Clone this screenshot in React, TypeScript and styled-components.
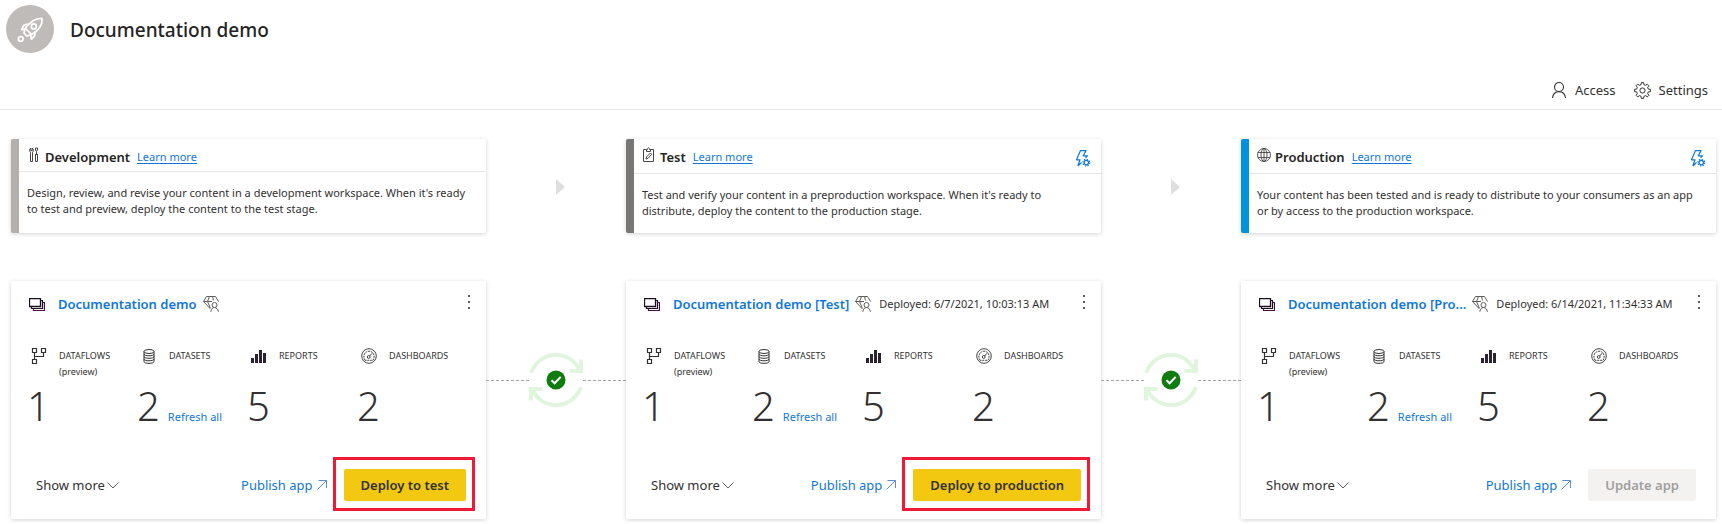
import React from 'react';
import styled, { createGlobalStyle } from 'styled-components';

const GlobalStyle = createGlobalStyle`
  *, *::before, *::after { box-sizing: border-box; }
  body {
    margin: 0;
    background: #fff;
    color: #323130;
    font-family: "Noto Sans", "Open Sans", sans-serif;
    font-size: 13px;
    line-height: 20px;
  }
  h1, h2, h3, p, dl, dd, dt { margin: 0; }
  button { font-family: inherit; cursor: pointer; }
  svg { display: block; flex: none; }
`;

/* ---------- icons ---------- */

const RocketIcon = () => (
  <svg width="48" height="48" viewBox="0 0 48 48" fill="none" stroke="#fff" strokeWidth="1.8" strokeLinejoin="round" aria-hidden="true">
    <path d="M36 13.4C29.500 13 24.500 16.500 19.200 23.200L25.700 29.600C32.500 25.500 36.800 20.500 36 13.400Z" />
    <circle cx="27.800" cy="21.400" r="2.500" />
    <path d="M23 19L18 20.200L15.600 24.700L18.700 24.300M29 27.300L28.600 30.800L25.600 34.200L24.600 30.800" />
    <path d="M19.200 23.200L18 28L20.700 31L25.700 29.600" />
    <circle cx="14.700" cy="34" r="2.300" />
  </svg>
);

const PersonIcon = () => (
  <svg width="16" height="18" viewBox="0 0 16 18" fill="none" stroke="#323130" strokeWidth="1.100" aria-hidden="true">
    <circle cx="8" cy="6" r="4.500" />
    <path d="M1.500 17C2 13 4.500 10.600 8 10.600S14 13 14.500 17" />
  </svg>
);

const gearPath = (cx: number, cy: number, outer: number, inner: number) => {
  const pts: string[] = [];
  for (let i = 0; i < 8; i += 1) {
    [[-14, inner], [-8, outer], [8, outer], [14, inner]].forEach(([off, r]) => {
      const a = ((i * 45 + off) * Math.PI) / 180;
      pts.push(`${(cx + r * Math.cos(a)).toFixed(2)} ${(cy + r * Math.sin(a)).toFixed(2)}`);
    });
  }
  return `M${pts.join('L')}Z`;
};

const GearIcon = () => (
  <svg width="17" height="17" viewBox="0 0 17 17" fill="none" stroke="#323130" strokeLinejoin="round" aria-hidden="true">
    <path d={gearPath(8.5, 8.5, 8, 6)} />
    <circle cx="8.500" cy="8.500" r="2.600" />
  </svg>
);

const ToolsIcon = () => (
  <svg width="14" height="16" viewBox="0 0 14 16" fill="none" stroke="#484644" strokeWidth="1" aria-hidden="true">
    <path d="M3.800 1V3.700H5.200V1C6.800 2 6.700 4.400 5.500 5.300V14.500H3.500V5.300C2.300 4.400 2.200 2 3.800 1Z" />
    <path d="M8.500 1H10.500V3L9.500 4.500L8.500 3ZM9.500 4.500V7.500M8 7.500H11M8.500 7.500V14.500H10.500V7.500" />
  </svg>
);

const ClipboardIcon = () => (
  <svg width="14" height="16" viewBox="0 0 14 16" fill="none" stroke="#484644" strokeWidth="1" aria-hidden="true">
    <path d="M4.500 2.500H1.500V14.500H11.500V2.500H8.500" />
    <path d="M4.500 4.500V2.500H5.500C5.500 0.200 7.500 0.200 7.500 2.500H8.500V4.500Z" />
    <path d="M4 12L4.600 9.800L8.400 6L9.700 7.300L6 11.300Z" />
  </svg>
);

const GlobeIcon = () => (
  <svg width="14" height="16" viewBox="0 0 14 16" fill="none" stroke="#484644" strokeWidth="0.900" aria-hidden="true">
    <circle cx="7" cy="8" r="6.500" />
    <ellipse cx="7" cy="8" rx="3" ry="6.500" />
    <path d="M7 1.500V14.500M1 5.500H13M1 10.500H13" />
  </svg>
);

const RuleIcon = () => (
  <svg width="16" height="17" viewBox="0 0 16 17" fill="none" stroke="#1177d7" strokeWidth="1.200" strokeLinejoin="round" aria-hidden="true">
    <path d="M2.800 16L5 9.800H1.500L5.500 0.600H11L8.300 5.800H12.500L10.500 7.800M2.800 16L6.500 12.500" />
    <circle cx="11.300" cy="12.600" r="2.200" />
    <circle cx="11.300" cy="12.600" r="3.400" strokeDasharray="1.300 1.370" />
  </svg>
);

const StackIcon = () => (
  <svg width="16" height="13" viewBox="0 0 16 13" fill="none" stroke="#1b1020" strokeWidth="1" aria-hidden="true">
    <path d="M0.500 0.500H11.500V8.500H0.500Z" strokeWidth="1.300" />
    <path d="M11.500 2.500H13.500V10.500H2.500V8.500" strokeWidth="1.200" />
    <path d="M13.500 4.500H15.500V12.500H4.500V10.500" stroke="#4a0d4a" strokeWidth="1.200" />
  </svg>
);

const DiamondIcon = () => (
  <svg width="16" height="16" viewBox="0 0 16 16" fill="none" stroke="#605e5c" strokeWidth="1" strokeLinejoin="round" aria-hidden="true">
    <path d="M7.500 13L0.500 5.500L3.500 0.500H12.500L15.500 5.500M0.500 5.500H9M4.500 5.500L7.300 12M4.500 5.500L6.500 0.500M10.500 4.500L9.500 0.500" />
    <circle cx="11.500" cy="9" r="2.500" />
    <path d="M7.800 15.800C8.200 13 9.600 11.500 11.500 11.500S15 13 15.400 15.800" />
  </svg>
);

const DataflowIcon = () => (
  <svg width="16" height="16" viewBox="0 0 16 16" fill="none" stroke="#323130" strokeWidth="1.200" aria-hidden="true">
    <path d="M1.500 0.500H5.500V4.500H1.500ZM10.500 0.500H14.500V4.500H10.500ZM1.500 11.500H5.500V15.500H1.500Z" />
    <path d="M3.500 4.500V11.500M3.500 8.500H12.500V4.500" />
  </svg>
);

const DatasetIcon = () => (
  <svg width="12" height="15" viewBox="0 0 12 15" fill="none" stroke="#323130" strokeWidth="1" aria-hidden="true">
    <ellipse cx="6" cy="2.500" rx="5" ry="2" />
    <path d="M1 2.500V12.500C1 15 11 15 11 12.500V2.500M1 5C1 7.400 11 7.400 11 5M1 7.500C1 9.900 11 9.900 11 7.500M1 10C1 12.400 11 12.400 11 10" />
  </svg>
);

const ReportIcon = () => (
  <svg width="16" height="14" viewBox="0 0 16 14" fill="#2b2430" aria-hidden="true">
    <path d="M0 9H3V14H0ZM4 5H7V14H4ZM8 1H11V14H8ZM12 4H15V14H12Z" />
  </svg>
);

const DashboardIcon = () => (
  <svg width="16" height="16" viewBox="0 0 16 16" fill="none" stroke="#323130" strokeWidth="0.900" aria-hidden="true">
    <circle cx="8" cy="8" r="7.300" />
    <path d="M4 12.300C1.500 8.500 3.300 3.300 8 3.200S14.500 8.500 12 12.300Z" strokeDasharray="2 0.800" />
    <circle cx="7.700" cy="9" r="1.400" />
    <path d="M8.700 8L11 5.300" />
  </svg>
);

const ChevronIcon = () => (
  <svg width="12" height="7" viewBox="0 0 12 7" fill="none" stroke="#605e5c" aria-hidden="true">
    <path d="M0.500 0.500L6 6L11.500 0.500" />
  </svg>
);

const OpenIcon = () => (
  <svg width="10" height="10" viewBox="0 0 10 10" fill="none" stroke="#5a8fd8" aria-hidden="true">
    <path d="M1.500 0.500H9.500V8M9.500 0.500L0.500 9.500" />
  </svg>
);

const MoreIcon = () => (
  <svg width="2" height="14" viewBox="0 0 2 14" fill="#605e5c" aria-hidden="true">
    <path d="M0 0H2V2H0ZM0 6H2V8H0ZM0 12H2V14H0Z" />
  </svg>
);

const ArrowIcon = () => (
  <svg width="18" height="16" viewBox="0 0 18 16" fill="#dfdfdf" aria-hidden="true">
    <path d="M9 0L18 8L9 16Z" />
  </svg>
);

const SyncIcon = () => (
  <svg width="54" height="54" viewBox="0 0 54 54" fill="none" aria-label="Stages are in sync" role="img">
    <g stroke="#dff6dd" strokeWidth="4">
      <path d="M2 20C6 9 15.500 2 27 2C37.500 2 46 8 50.500 17" />
      <path d="M52 6.500V18H40.500" />
      <path d="M52 34C48 45 38.500 52 27 52C16.500 52 8 46 3.500 37" />
      <path d="M2 47.500V36H13.500" />
    </g>
    <circle cx="27" cy="27" r="9.500" fill="#107c10" />
    <path d="M22.500 27.300L25.600 30.300L31.700 23.900" stroke="#fff" strokeWidth="2" />
  </svg>
);

/* ---------- page chrome ---------- */

const Header = styled.header`
  display: flex;
  align-items: center;
  gap: 16px;
  padding: 5px 6px 0;
`;

const Avatar = styled.span`
  width: 48px;
  height: 48px;
  border-radius: 50%;
  background: #bfbbb8;
`;

const PageTitle = styled.h1`
  padding-top: 2px;
  font-size: 19px;
  font-weight: 500;
  line-height: 28px;
  color: #252423;
`;

const Toolbar = styled.div`
  display: flex;
  justify-content: flex-end;
  gap: 18px;
  padding: 27px 14px 9px;
  border-bottom: 1px solid #e6e6e6;
`;

const ToolButton = styled.button`
  display: flex;
  align-items: center;
  gap: 8px;
  padding: 0;
  border: 0;
  background: none;
  color: #323130;
  font-size: 13px;
  line-height: 20px;
`;

const Pipeline = styled.main`
  display: grid;
  grid-template-columns: minmax(0, 1fr) 140px minmax(0, 1fr) 140px minmax(0, 1fr);
  row-gap: 48px;
  padding: 29px 6px 5px 11px;
`;

const Card = styled.section`
  border-radius: 2px;
  background: #fff;
  box-shadow: 0 1px 4px rgba(0, 0, 0, 0.18);
`;

/* ---------- stage cards ---------- */

const StageCard = styled(Card)<{ $accent: string }>`
  border-left: 8px solid ${(p) => p.$accent};
`;

const StageHeader = styled.div`
  display: flex;
  align-items: flex-start;
  padding: 8px 10px 4px 8px;
  border-bottom: 1px solid #e6e6e6;
`;

const StageTitle = styled.h2`
  display: flex;
  gap: 4px;
  margin-right: 7px;
  font-size: 13px;
  font-weight: 600;
  line-height: 20px;
  color: #252423;
`;

const LearnMore = styled.a`
  font-size: 11px;
  line-height: 20px;
  color: #1177d7;
  text-underline-offset: 2px;
`;

const RuleButton = styled.button`
  margin-left: auto;
  padding: 3px 0 2px;
  border: 0;
  background: none;
`;

const StageText = styled.p`
  padding: 13px 12px 14px 8px;
  font-size: 11px;
  line-height: 16px;
`;

const StageArrow = styled.div`
  display: flex;
  align-items: center;
  justify-content: center;
  padding-top: 2px;
`;

/* ---------- workspace cards ---------- */

const WorkspaceCard = styled(Card)`
  display: flex;
  flex-direction: column;
  padding: 13px 0 18px;
`;

const WorkspaceHeader = styled.div`
  display: flex;
  align-items: center;
  padding: 0 16px 0 18px;
`;

const WorkspaceName = styled.a`
  min-width: 0;
  max-width: 182px;
  margin: 0 6px 0 13px;
  overflow: hidden;
  text-overflow: ellipsis;
  white-space: nowrap;
  font-size: 13px;
  font-weight: 600;
  line-height: 20px;
  color: #1177d7;
  text-decoration: none;
`;

const Deployed = styled.span`
  margin-left: 8px;
  font-size: 11px;
  white-space: nowrap;
`;

const MoreButton = styled.button`
  margin-left: auto;
  padding: 0 0 4px;
  border: 0;
  background: none;
`;

const Metrics = styled.dl`
  display: grid;
  grid-template-columns: repeat(4, 1fr);
  padding: 34px 19px 0 16px;
`;

const Metric = styled.div`
  display: flex;
  flex-direction: column;
`;

const MetricLabel = styled.dt`
  display: flex;
  gap: 8px;
  min-height: 32px;
  font-size: 9px;
  line-height: 16px;
`;

const MetricIcon = styled.span`
  display: flex;
  align-items: center;
  justify-content: center;
  width: 24px;
  height: 16px;
`;

const MetricNote = styled.span`
  display: block;
`;

const MetricValue = styled.dd`
  display: flex;
  align-items: baseline;
  gap: 8px;
  padding-top: 2px;
  font-size: 40px;
  font-weight: 300;
  line-height: 48px;
`;

const TextLink = styled.a<{ $small?: boolean }>`
  display: inline-flex;
  align-items: center;
  gap: 4px;
  font-size: ${(p) => (p.$small ? '11px' : '13px')};
  font-weight: 400;
  line-height: 20px;
  color: #1177d7;
  text-decoration: none;
  white-space: nowrap;
`;

const Footer = styled.div`
  display: flex;
  align-items: center;
  margin-top: 39px;
  padding: 0 20px 0 25px;
`;

const ShowMore = styled.button`
  display: flex;
  align-items: center;
  gap: 2px;
  margin-right: auto;
  padding: 0;
  border: 0;
  background: none;
  color: #323130;
  font-size: 13px;
  line-height: 20px;
`;

const Action = styled.span<{ $highlight: boolean }>`
  position: relative;
  margin-left: 17px;

  &::after {
    content: '';
    display: ${(p) => (p.$highlight ? 'block' : 'none')};
    position: absolute;
    inset: -12px -9px -10px -11px;
    border: 3px solid #f11a36;
    pointer-events: none;
  }
`;

const ActionButton = styled.button`
  display: block;
  height: 32px;
  padding: 0 17px;
  border: 0;
  border-radius: 2px;
  background: #f2c811;
  color: #323130;
  font-size: 13px;
  font-weight: 600;
  line-height: 20px;

  &:disabled {
    background: #f3f2f1;
    color: #a19f9d;
    cursor: default;
  }
`;

const Connector = styled.div`
  display: flex;
  align-items: center;
  padding-bottom: 40px;
`;

const Dash = styled.span`
  flex: 1;
  border-top: 1px dashed #a6a6a6;
`;

/* ---------- data ---------- */

interface Stage {
  name: string;
  accent: string;
  icon: React.ReactNode;
  text: string;
  hasRules: boolean;
  workspace: string;
  deployed?: string;
  action: string;
  disabled?: boolean;
}

const stages: Stage[] = [
  {
    name: 'Development',
    accent: '#b3b0ad',
    icon: <ToolsIcon />,
    text: "Design, review, and revise your content in a development workspace. When it's ready to test and preview, deploy the content to the test stage.",
    hasRules: false,
    workspace: 'Documentation demo',
    action: 'Deploy to test',
  },
  {
    name: 'Test',
    accent: '#797775',
    icon: <ClipboardIcon />,
    text: "Test and verify your content in a preproduction workspace. When it's ready to distribute, deploy the content to the production stage.",
    hasRules: true,
    workspace: 'Documentation demo [Test]',
    deployed: 'Deployed: 6/7/2021, 10:03:13 AM',
    action: 'Deploy to production',
  },
  {
    name: 'Production',
    accent: '#0093db',
    icon: <GlobeIcon />,
    text: 'Your content has been tested and is ready to distribute to your consumers as an app or by access to the production workspace.',
    hasRules: true,
    workspace: 'Documentation demo [Pro...',
    deployed: 'Deployed: 6/14/2021, 11:34:33 AM',
    action: 'Update app',
    disabled: true,
  },
];

const metrics = [
  { label: 'DATAFLOWS', note: '(preview)', value: 1, icon: <DataflowIcon /> },
  { label: 'DATASETS', value: 2, refresh: true, icon: <DatasetIcon /> },
  { label: 'REPORTS', value: 5, icon: <ReportIcon /> },
  { label: 'DASHBOARDS', value: 2, icon: <DashboardIcon /> },
];

const StageInfo = ({ stage }: { stage: Stage }) => (
  <StageCard $accent={stage.accent}>
    <StageHeader>
      <StageTitle>
        {stage.icon}
        {stage.name}
      </StageTitle>
      <LearnMore href="#learn">Learn more</LearnMore>
      {stage.hasRules && (
        <RuleButton aria-label="Deployment settings">
          <RuleIcon />
        </RuleButton>
      )}
    </StageHeader>
    <StageText>{stage.text}</StageText>
  </StageCard>
);

const Workspace = ({ stage }: { stage: Stage }) => (
  <WorkspaceCard>
    <WorkspaceHeader>
      <StackIcon />
      <WorkspaceName href="#workspace">{stage.workspace}</WorkspaceName>
      <DiamondIcon />
      {stage.deployed && <Deployed>{stage.deployed}</Deployed>}
      <MoreButton aria-label="More options">
        <MoreIcon />
      </MoreButton>
    </WorkspaceHeader>
    <Metrics>
      {metrics.map((m) => (
        <Metric key={m.label}>
          <MetricLabel>
            <MetricIcon>{m.icon}</MetricIcon>
            <span>
              {m.label}
              {m.note && <MetricNote>{m.note}</MetricNote>}
            </span>
          </MetricLabel>
          <MetricValue>
            {m.value}
            {m.refresh && <TextLink $small href="#refresh">Refresh all</TextLink>}
          </MetricValue>
        </Metric>
      ))}
    </Metrics>
    <Footer>
      <ShowMore>
        Show more
        <ChevronIcon />
      </ShowMore>
      <TextLink href="#publish">
        Publish app
        <OpenIcon />
      </TextLink>
      <Action $highlight={!stage.disabled}>
        <ActionButton disabled={stage.disabled}>{stage.action}</ActionButton>
      </Action>
    </Footer>
  </WorkspaceCard>
);

export default function App() {
  return (
    <>
      <GlobalStyle />
      <Header>
        <Avatar>
          <RocketIcon />
        </Avatar>
        <PageTitle>Documentation demo</PageTitle>
      </Header>
      <Toolbar>
        <ToolButton>
          <PersonIcon />
          Access
        </ToolButton>
        <ToolButton>
          <GearIcon />
          Settings
        </ToolButton>
      </Toolbar>
      <Pipeline>
        {stages.map((stage, i) => (
          <React.Fragment key={stage.name}>
            {i > 0 && (
              <StageArrow>
                <ArrowIcon />
              </StageArrow>
            )}
            <StageInfo stage={stage} />
          </React.Fragment>
        ))}
        {stages.map((stage, i) => (
          <React.Fragment key={stage.workspace}>
            {i > 0 && (
              <Connector>
                <Dash />
                <SyncIcon />
                <Dash />
              </Connector>
            )}
            <Workspace stage={stage} />
          </React.Fragment>
        ))}
      </Pipeline>
    </>
  );
}
